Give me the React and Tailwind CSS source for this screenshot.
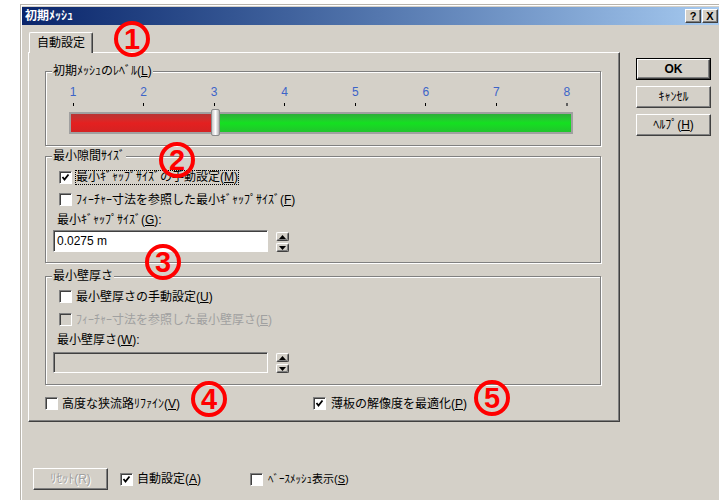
import React from "react";

// Classic dialog chrome: raised buttons, sunken fields, etched group frames
const FONT = "font-['Liberation_Sans','Noto_Sans_CJK_JP',sans-serif]";
const RAISED =
  "border border-white border-r-[#404040] border-b-[#404040] shadow-[inset_-1px_-1px_0_#808080] bg-[#d4d0c8]";
const SUNKEN =
  "border border-[#808080] border-r-white border-b-white shadow-[inset_1px_1px_0_#404040]";

const LEVELS = [1, 2, 3, 4, 5, 6, 7, 8];

const Check = ({ checked, disabled }) => (
  <span
    className={`flex h-[13px] w-[13px] shrink-0 items-center justify-center ${SUNKEN} ${
      disabled ? "bg-[#d4d0c8]" : "bg-white"
    }`}
  >
    {checked && (
      <svg width="9" height="9" viewBox="0 0 9 9">
        <path d="M1.5 4 L3.5 6.5 L7.5 1.5" stroke="#000" strokeWidth="1.8" fill="none" />
      </svg>
    )}
  </span>
);

const Group = ({ label, className, children }) => (
  <div
    className={`relative w-[556px] border border-[#808080] shadow-[inset_1px_1px_0_#ffffff,1px_1px_0_#ffffff] ${className}`}
  >
    <span className="absolute left-[6px] -top-[8px] bg-[#d4d0c8] px-[1px] leading-[14px]">
      {label}
    </span>
    {children}
  </div>
);

const Spinner = ({ className }) => (
  <div className={`ml-[8px] flex flex-col gap-[2px] ${className}`}>
    <span className={`flex h-[9px] w-[13px] items-center justify-center rounded-[2px] ${RAISED}`}>
      <svg width="7" height="4" viewBox="0 0 7 4">
        <path d="M0 4 L3.5 0 L7 4 Z" fill="#000" />
      </svg>
    </span>
    <span className={`flex h-[9px] w-[13px] items-center justify-center rounded-[2px] ${RAISED}`}>
      <svg width="7" height="4" viewBox="0 0 7 4">
        <path d="M0 0 L7 0 L3.5 4 Z" fill="#000" />
      </svg>
    </span>
  </div>
);

const Mark = ({ n, className }) => (
  <div
    className={`absolute flex h-[36px] w-[36px] items-center justify-center rounded-full border-[4px] border-[#ff0000] text-[29px] font-bold leading-none text-[#ff0000] font-['Liberation_Sans',sans-serif] ${className}`}
  >
    {n}
  </div>
);

const Button = ({ children, primary, className = "" }) => (
  <div className={primary ? "border border-black" : ""}>
    <div
      className={`flex items-center justify-center ${RAISED} ${
        primary ? "h-[20px] w-[73px]" : "h-[22px] w-[75px]"
      } ${className}`}
    >
      {children}
    </div>
  </div>
);

export default function App() {
  return (
    <div
      className={`relative h-[500px] w-[719px] overflow-hidden bg-white pl-[20px] pt-[4px] text-[12px] leading-[14px] text-black ${FONT}`}
    >
      <div className="h-full border-l border-t border-[#b8b4ac] bg-[#d4d0c8] pl-[1px] pt-[2px] shadow-[inset_1px_1px_0_#ffffff]">
        {/* title bar */}
        <div className="flex h-[18px] items-center justify-between bg-linear-to-r from-[#0a246a] to-[#a6caf0] pl-[3px] pr-[1px]">
          <span className="font-bold text-white">初期ﾒｯｼｭ</span>
          <div className="flex gap-[1px]">
            <span className={`flex h-[14px] w-[16px] items-center justify-center text-[11px] font-bold ${RAISED}`}>?</span>
            <span className={`flex h-[14px] w-[16px] items-center justify-center text-[11px] font-bold ${RAISED}`}>X</span>
          </div>
        </div>

        <div className="flex">
          <div className="pl-[6px] pt-[7px]">
            {/* tab */}
            <div className="relative z-10 -mb-[1px] ml-[1px] flex h-[21px] w-[64px] items-center justify-center rounded-t-[2px] border-l border-t border-white border-r-[#404040] border-r bg-[#d4d0c8] shadow-[inset_-1px_0_0_#808080]">
              自動設定
            </div>

            {/* tab page */}
            <div className="h-[370px] w-[592px] border border-white border-r-[#404040] border-b-[#404040] pl-[16px] pt-[18px] shadow-[inset_-1px_-1px_0_#808080]">
              <Group label={<>初期ﾒｯｼｭのﾚﾍﾞﾙ(<u>L</u>)</>} className="h-[75px]">
                <div className="ml-[22px] mt-[14px] flex w-[504px] justify-between leading-[12px] text-[#3c64c8]">
                  {LEVELS.map((n) => (
                    <span key={n} className="w-[10px] text-center">{n}</span>
                  ))}
                </div>
                <div className="ml-[22px] mt-[5px] flex h-[4px] w-[504px] justify-between">
                  {LEVELS.map((n) => (
                    <span key={n} className="flex w-[10px] justify-center">
                      <span className={`h-[3px] ${n === 8 ? "w-[2px] bg-[#606060]" : "w-[1px] bg-black"}`} />
                    </span>
                  ))}
                </div>
                <div className="relative ml-[23px] mt-[5px] flex h-[22px] w-[504px] border-2 border-[#a0a0a0]">
                  <div className="w-[141px] bg-linear-to-b from-[#b83434] via-[#e42020] to-[#d42222]" />
                  <div className="flex-1 bg-linear-to-b from-[#2cae38] via-[#14e020] to-[#20c42c]" />
                  <div className="absolute -top-[5px] left-[140px] h-[27px] w-[9px] rounded-[2px] border border-[#8c8c8c] bg-linear-to-r from-[#c8c8c8] via-[#ffffff] to-[#b4b4b4]" />
                </div>
              </Group>

              <Group label="最小隙間ｻｲｽﾞ" className="mt-[10px] h-[107px]">
                <div className="ml-[13px] mt-[14px] flex h-[13px] items-center">
                  <Check checked />
                  <span className="ml-[3px] border border-dotted border-black leading-[13px]">
                    最小ｷﾞｬｯﾌﾟｻｲｽﾞの手動設定(<u>M</u>)
                  </span>
                </div>
                <div className="ml-[13px] mt-[9px] flex h-[13px] items-center">
                  <Check />
                  <span className="ml-[4px]">ﾌｨｰﾁｬｰ寸法を参照した最小ｷﾞｬｯﾌﾟｻｲｽﾞ(<u>F</u>)</span>
                </div>
                <div className="ml-[11px] mt-[7px] h-[14px]">最小ｷﾞｬｯﾌﾟｻｲｽﾞ(<u>G</u>):</div>
                <div className="ml-[7px] mt-[3px] flex">
                  <div className={`flex h-[22px] w-[215px] items-center bg-white pl-[3px] ${SUNKEN}`}>0.0275 m</div>
                  <Spinner className="mt-[2px]" />
                </div>
              </Group>

              <Group label="最小壁厚さ" className="mt-[13px] h-[109px]">
                <div className="ml-[13px] mt-[13px] flex h-[13px] items-center">
                  <Check />
                  <span className="ml-[4px]">最小壁厚さの手動設定(<u>U</u>)</span>
                </div>
                <div className="ml-[13px] mt-[10px] flex h-[13px] items-center text-[#a0a0a0]">
                  <Check disabled />
                  <span className="ml-[4px]">ﾌｨｰﾁｬｰ寸法を参照した最小壁厚さ(<u>E</u>)</span>
                </div>
                <div className="ml-[11px] mt-[7px] h-[14px]">最小壁厚さ(<u>W</u>):</div>
                <div className="ml-[7px] mt-[5px] flex">
                  <div className={`h-[21px] w-[215px] bg-[#d4d0c8] ${SUNKEN}`} />
                  <Spinner className="mt-[1px]" />
                </div>
              </Group>

              <div className="mt-[12px] flex h-[13px] items-center">
                <div className="flex w-[268px] items-center">
                  <Check />
                  <span className="ml-[4px]">高度な狭流路ﾘﾌｧｲﾝ(<u>V</u>)</span>
                </div>
                <Check checked />
                <span className="ml-[5px]">薄板の解像度を最適化(<u>P</u>)</span>
              </div>
            </div>
          </div>

          {/* dialog buttons */}
          <div className="ml-[16px] mt-[33px] flex flex-col gap-[6px]">
            <Button primary className="font-bold">OK</Button>
            <Button>ｷｬﾝｾﾙ</Button>
            <Button>ﾍﾙﾌﾟ(<u>H</u>)</Button>
          </div>
        </div>

        {/* bottom row */}
        <div className="ml-[11px] mt-[46px] flex items-center">
          <Button className="text-[#a0a0a0] [text-shadow:1px_1px_0_#ffffff]">ﾘｾｯﾄ(R)</Button>
          <div className="ml-[12px] flex w-[130px] items-center">
            <Check checked />
            <span className="ml-[4px]">自動設定(<u>A</u>)</span>
          </div>
          <Check />
          <span className="ml-[5px] text-[11px]">ﾍﾞｰｽﾒｯｼｭ表示(<u>S</u>)</span>
        </div>
      </div>

      <Mark n="1" className="left-[114px] top-[21px]" />
      <Mark n="2" className="left-[159px] top-[142px]" />
      <Mark n="3" className="left-[145px] top-[244px]" />
      <Mark n="4" className="left-[191px] top-[381px]" />
      <Mark n="5" className="left-[474px] top-[380px]" />
    </div>
  );
}
